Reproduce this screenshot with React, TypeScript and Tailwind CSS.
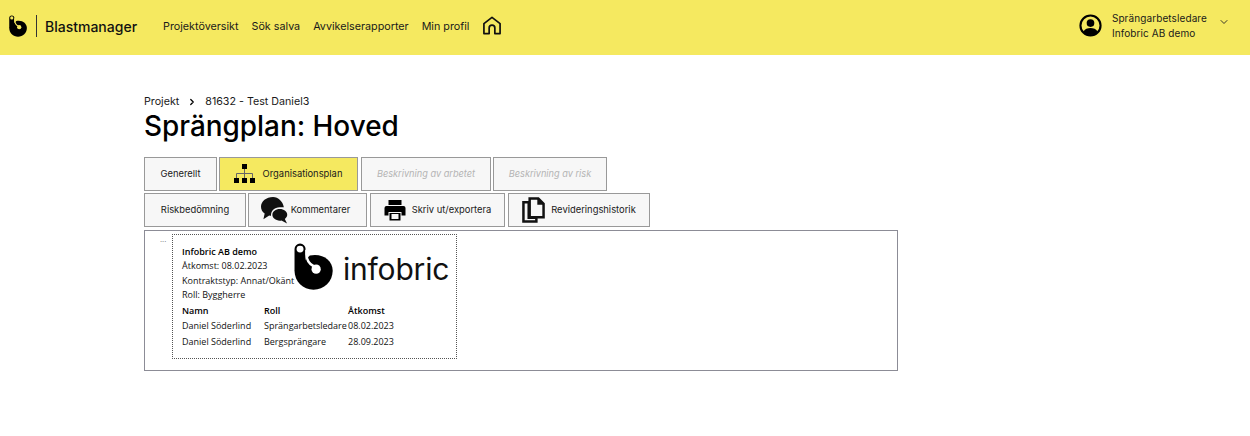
import React from "react";
import { ChevronDown, ChevronRight } from "lucide-react";

const inter = "font-['Inter','Liberation_Sans',sans-serif]";

function Logo({ className, cut }: { className?: string; cut: string }) {
  return (
    <svg viewBox="0 0 37 44" className={className}>
      <path d="M.5 5.5a5.25 5.25 0 0 1 10.5 0V26H.5Z" fill="#000" />
      <path d="M15 11.5C27 9 36.7 16 36.7 26 36.7 36 28.5 44 18.5 44 8.5 44 .5 36 .5 26Z" fill="#000" />
      <path d="M11.8 6V10C11.8 16 15 20 19 22" fill="none" stroke={cut} strokeWidth="2.4" />
      <circle cx="21" cy="24.5" r="4.4" fill={cut} />
      <circle cx="5.75" cy="5.5" r="3.3" fill={cut} />
    </svg>
  );
}

function OrgIcon() {
  return (
    <svg width="22" height="20" viewBox="0 0 22 20" className="shrink-0">
      <rect x="8" y="0" width="5" height="5" fill="#000" />
      <rect x="0" y="14" width="5" height="5" fill="#000" />
      <rect x="8" y="14" width="5" height="5" fill="#000" />
      <rect x="16" y="14" width="5" height="5" fill="#000" />
      <path d="M10.5 5V14M2.5 14V9.5H18.5V14" stroke="#666" strokeWidth="1" fill="none" />
    </svg>
  );
}

function ChatIcon() {
  return (
    <svg width="27" height="27" viewBox="0 0 28 28" className="shrink-0">
      <path d="M12.5 0C5.5 0 0 4.5 0 10c0 3 1.5 5.5 3.8 7.2L2.5 23l6-3.8c.6.1 1.2.2 1.9.2-.5-4.7 3.5-8.9 9-8.9h4.3C22.5 4.5 18 0 12.5 0Z" fill="#111" />
      <path d="M19.5 12.5c-4.3 0-7.7 2.7-7.7 6s3.4 6 7.7 6c.6 0 1.2 0 1.7-.2l5.8 3.2-2.3-4.7c1.5-1.1 2.5-2.6 2.5-4.3 0-3.3-3.4-6-7.7-6Z" fill="#111" />
    </svg>
  );
}

function PrintIcon() {
  return (
    <svg width="22" height="22" viewBox="0 0 22 22" className="shrink-0">
      <path d="M4.5 1H17.5V6H4.5Z" fill="#000" />
      <path d="M2.5 7H19.5A2 2 0 0 1 21.5 9V16.5H17.5V13H4.5V16.5H.5V9A2 2 0 0 1 2.5 7Z" fill="#000" />
      <path d="M5.5 14H16.5V21.5H5.5Z" fill="#000" />
      <rect x="7.5" y="15" width="7" height="5" fill="#f7f7f7" />
    </svg>
  );
}

function CopyIcon() {
  return (
    <svg width="23" height="26" viewBox="0 0 24 27" className="shrink-0">
      <path d="M1.5 5.5H7V21.5H15V25.5H1.5Z" fill="#f7f7f7" stroke="#111" strokeWidth="2.6" />
      <path d="M8 1.5H17L22.5 7V21H8Z" fill="#f7f7f7" stroke="#111" strokeWidth="2.6" />
      <path d="M16 1.5V8H22.5Z" fill="#111" />
    </svg>
  );
}

function Tab({ w, active, disabled, icon, children }: { w: string; active?: boolean; disabled?: boolean; icon?: React.ReactNode; children: React.ReactNode }) {
  return (
    <div
      className={`${w} h-[34px] border border-[#999] flex items-center justify-center ${
        active ? "bg-[#f5e960]" : "bg-[#f7f7f7]"
      } ${disabled ? "italic text-[#b4b4b4] text-[9.2px]" : "text-[#1a1a1a] text-[9.4px]"}`}
    >
      {icon}
      <span>{children}</span>
    </div>
  );
}

export default function App() {
  return (
    <div className={`w-[1250px] h-[436px] bg-white overflow-hidden ${inter}`}>
      <header className="h-[55px] bg-[#f5e960] flex items-center pl-[9px] pr-[20px]">
        <Logo className="w-[18px] h-[22px] mt-[-4px]" cut="#f5e960" />
        <div className="w-px h-[22px] bg-[#333] ml-[9px] mr-[8px] mt-[-3px]" />
        <span className="text-[14px] font-medium text-[#111] mt-[-2px]">Blastmanager</span>
        <nav className="flex items-center gap-[13px] ml-[26px] text-[10.75px] text-[#1a1a1a]">
          <span>Projektöversikt</span>
          <span>Sök salva</span>
          <span>Avvikelserapporter</span>
          <span>Min profil</span>
        </nav>
        <svg width="20" height="19" viewBox="0 0 20 20" fill="none" stroke="#111" strokeWidth="1.8" className="ml-[13px] mt-[-5px]">
          <path d="M1.5 18.5V8L10 1.5 18.5 8V18.5H13V12.5A3 3 0 0 0 7 12.5V18.5Z" strokeLinejoin="round" />
        </svg>
        <div className="ml-auto flex items-center">
          <svg width="23" height="23" viewBox="0 0 24 24" className="mt-[-5px]">
            <circle cx="12" cy="12" r="10.5" fill="#f5e960" stroke="#000" strokeWidth="2.2" />
            <circle cx="12" cy="9.5" r="4" fill="#000" />
            <path d="M4.5 18.5C6 15.5 9 14.5 12 14.5s6 1 7.5 4A10 10 0 0 1 4.5 18.5Z" fill="#000" />
          </svg>
          <div className="ml-[10px] text-[10px] leading-[15px] text-[#1a1a1a] tracking-[0.1px] mt-[-4px]">
            <div>Sprängarbetsledare</div>
            <div>Infobric AB demo</div>
          </div>
          <ChevronDown className="ml-[11px] mt-[-12px] text-[#222]" size={12} strokeWidth={1.8} />
        </div>
      </header>

      <main className="pl-[144px] pt-[40px]">
        <div className="flex items-center text-[10.7px] leading-[13px] text-[#1a1a1a]">
          <span>Projekt</span>
          <ChevronRight className="ml-[8px] mr-[8px] text-[#000]" size={10} strokeWidth={3} />
          <span>81632 - Test Daniel3</span>
        </div>
        <h1 className="text-[27.9px] leading-[36px] text-black font-medium">Sprängplan: Hoved</h1>

        <div className="flex gap-[2px] mt-[13px]">
          <Tab w="w-[73px]">Generellt</Tab>
          <Tab w="w-[139px] gap-[7px] pr-[1px]" active icon={<OrgIcon />}>Organisationsplan</Tab>
          <Tab w="w-[130px] ml-[1px]" disabled>Beskrivning av arbetet</Tab>
          <Tab w="w-[114px]" disabled>Beskrivning av risk</Tab>
        </div>
        <div className="flex gap-[2px] mt-[2px]">
          <Tab w="w-[102px]">Riskbedömning</Tab>
          <Tab w="w-[119px] gap-[3px] pr-[4px]" icon={<ChatIcon />}>Kommentarer</Tab>
          <Tab w="w-[135px] ml-[1px] gap-[6px]" icon={<PrintIcon />}>Skriv ut/exportera</Tab>
          <Tab w="w-[142px] ml-[1px] gap-[6px]" icon={<CopyIcon />}>Revideringshistorik</Tab>
        </div>

        <section className="w-[754px] h-[141px] mt-[3px] border border-[#8c8c96] pt-[3px] pl-[27px] flex font-['Open_Sans','Noto_Sans',sans-serif] text-[9px] text-[#111]">
          <div className="relative w-[285px] h-[125px] border border-dotted border-[#555] pl-[9px] pt-[9px]">
            <span className="absolute left-[-13px] top-[0px] text-[8px] leading-[7px] text-[#777]">...</span>
            <div className="font-semibold leading-[15px] text-black">Infobric AB demo</div>
            <div className="leading-[14px]">Åtkomst: 08.02.2023</div>
            <div className="leading-[15px]">Kontraktstyp: Annat/Okänt</div>
            <div className="leading-[14px]">Roll: Byggherre</div>
            <div className="mt-[1px] grid grid-cols-[82px_84px_70px] leading-[16px]">
              <div className="font-semibold text-black leading-[15px]">Namn</div>
              <div className="font-semibold text-black leading-[15px]">Roll</div>
              <div className="font-semibold text-black leading-[15px]">Åtkomst</div>
              <div>Daniel Söderlind</div>
              <div className="whitespace-nowrap">Sprängarbetsledare</div>
              <div>08.02.2023</div>
              <div>Daniel Söderlind</div>
              <div>Bergsprängare</div>
              <div>28.09.2023</div>
            </div>
            <div className="absolute left-[121px] top-[8px] flex items-center">
              <Logo className="w-[39px] h-[47px]" cut="#fff" />
              <span className="ml-[10px] mt-[4px] text-[30px] leading-[40px] font-['Inter',sans-serif] font-normal text-[#111] tracking-[-0.2px]">infobric</span>
            </div>
          </div>
        </section>
      </main>
    </div>
  );
}
